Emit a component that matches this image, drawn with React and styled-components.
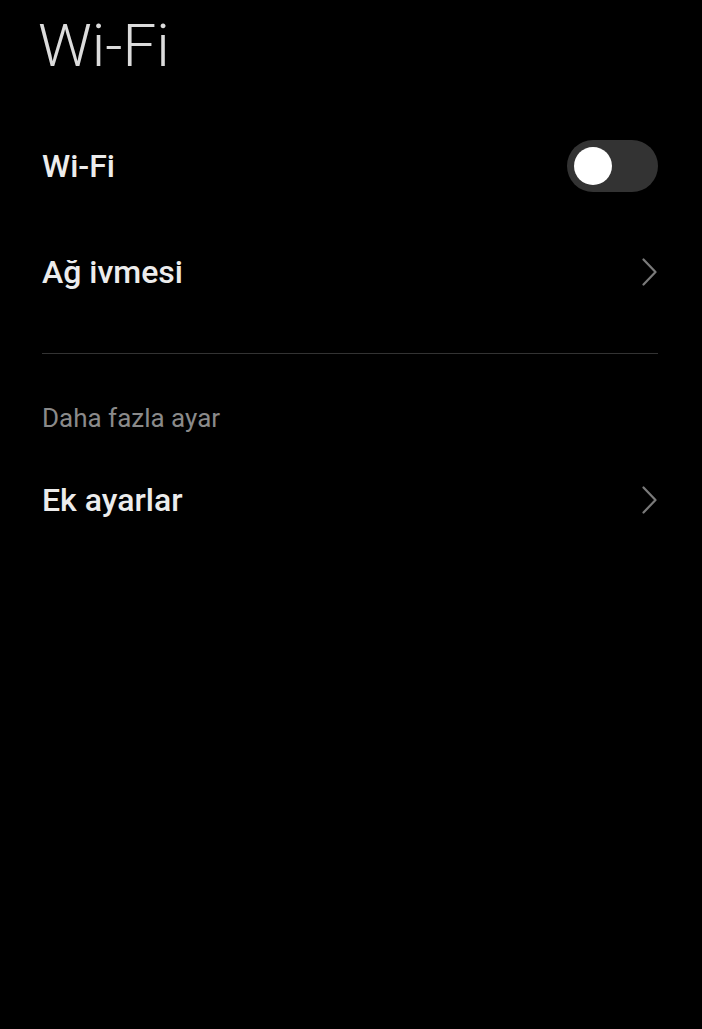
import React from 'react'
import styled, { createGlobalStyle } from 'styled-components'

const GlobalStyle = createGlobalStyle`
  html, body {
    margin: 0;
    padding: 0;
    background: #000;
  }
  body {
    font-family: Roboto, "Noto Sans", sans-serif;
    color: #ececec;
  }
`

const Page = styled.div`
  width: 702px;
  height: 1029px;
  background: #000;
  overflow: hidden;
`

const Title = styled.h1`
  margin: 0;
  padding: 11px 0 0 38px;
  height: 113px;
  box-sizing: border-box;
  font-size: 60px;
  font-weight: 300;
  line-height: 70px;
  color: #dcdcdc;
`

const Row = styled.div`
  display: flex;
  align-items: center;
  justify-content: space-between;
  height: ${props => props.height || 106}px;
  padding: 0 44px 0 42px;
`

const Label = styled.div`
  font-size: 32px;
  font-weight: 500;
  color: #ececec;
`

const Toggle = styled.div`
  width: 91px;
  height: 52px;
  border-radius: 26px;
  background: #333333;
  display: flex;
  align-items: center;
  padding: 0 7px;
  box-sizing: border-box;
  justify-content: ${props => (props.on ? 'flex-end' : 'flex-start')};
`

const Knob = styled.div`
  width: 38px;
  height: 38px;
  border-radius: 50%;
  background: #fff;
`

const Divider = styled.hr`
  margin: 28px 44px 0 42px;
  border: 0;
  height: 1px;
  background: #333;
`

const SectionHeader = styled.div`
  padding: 49px 42px 0 42px;
  height: 104px;
  box-sizing: border-box;
  font-size: 26px;
  color: #8a8a8a;
`

function Chevron() {
  return (
    <svg width="16" height="28" viewBox="0 0 16 28" fill="none">
      <path d="M1.5 1.5 L13.5 14 L1.5 26.5" stroke="#7a7a7a" strokeWidth="2.2" strokeLinecap="round" strokeLinejoin="round" />
    </svg>
  )
}

export default function App() {
  return (
    <Page>
      <GlobalStyle />
      <Title>Wi-Fi</Title>
      <Row>
        <Label>Wi-Fi</Label>
        <Toggle on={false}>
          <Knob />
        </Toggle>
      </Row>
      <Row>
        <Label>Ağ ivmesi</Label>
        <Chevron />
      </Row>
      <Divider />
      <SectionHeader>Daha fazla ayar</SectionHeader>
      <Row height={84}>
        <Label>Ek ayarlar</Label>
        <Chevron />
      </Row>
    </Page>
  )
}
